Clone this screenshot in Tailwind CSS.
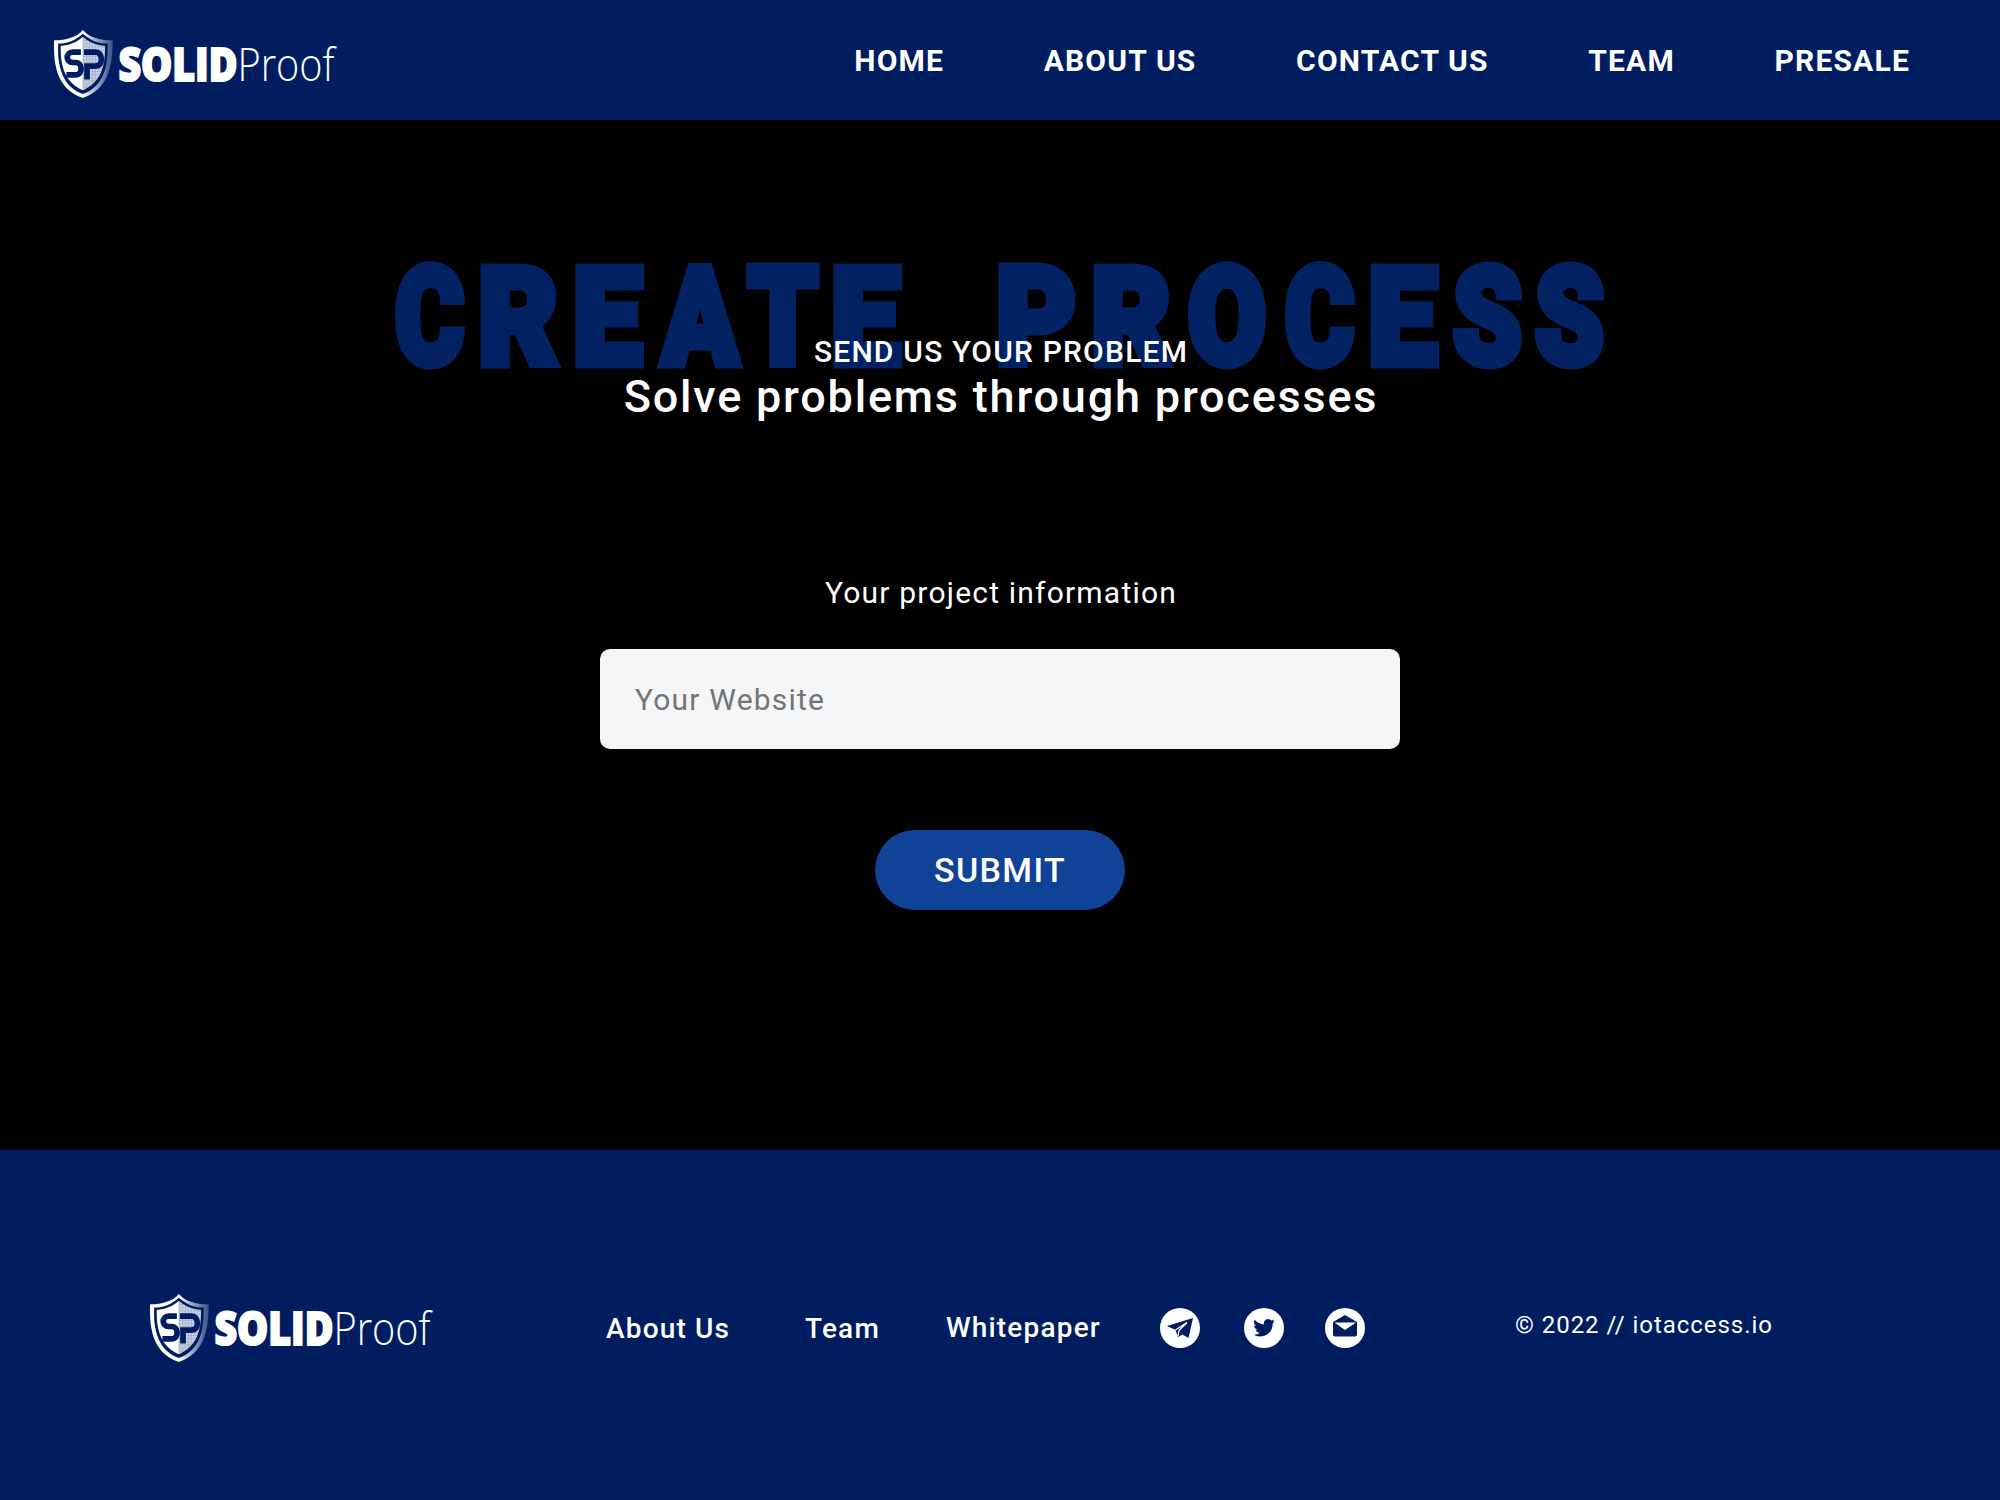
<!DOCTYPE html>
<html lang="en">
<head>
<meta charset="utf-8">
<title>Create Process</title>
<script src="https://cdn.jsdelivr.net/npm/@tailwindcss/browser@4"></script>
</head>
<body class="flex h-[1500px] w-[2000px] flex-col overflow-hidden bg-black font-['Roboto',sans-serif] text-white">
<svg class="absolute h-0 w-0">
  <defs>
    <linearGradient id="rim" x1="0" x2="1" y1="0" y2="0">
      <stop offset="0.5" stop-color="#fff"/><stop offset="0.65" stop-color="#b4bdd6"/><stop offset="1" stop-color="#3a5088"/>
    </linearGradient>
    <pattern id="mesh" width="3" height="3" patternUnits="userSpaceOnUse">
      <rect width="3" height="3" fill="#c9d0e2"/><path d="M0 0H3M0 0V3" stroke="#98a5c6" stroke-width="1"/>
    </pattern>
    <symbol id="logo" viewBox="0 0 290 76">
      <g transform="scale(1.03)">
      <path d="M30 2C24 9 14 12 2 12C1 38 6 60 30 68C54 60 59 38 59 12C46 12 36 9 30 2Z" fill="url(#rim)"/>
      <path d="M30 5.500C23 12 15 15 6 15C5 37 10 57 30 64C50 57 55 37 54 15C45 15 37 12 30 5.500Z" fill="#001d60"/>
      <path d="M30 8.500C24 14 17 16.500 8.500 17.500C8 38 13 53 30 60.500Z" fill="#fff"/>
      <path d="M30 8.500C36 14 43 16.500 51.500 17.500C52 38 47 53 30 60.500Z" fill="url(#mesh)"/>
      <path d="M28 23.500H20C13 23.500 13 33.500 20 33.500H23C30 33.500 30 45.500 23 45.500H14" fill="none" stroke="#001d60" stroke-width="5.500"/>
      <path d="M34 50V37H42C50 37 50 23.500 42 23.500H31" fill="none" stroke="#001d60" stroke-width="5.500"/>
      </g>
      <text y="53" fill="#fff" font-family="Open Sans, sans-serif" font-size="46.500"><tspan x="66.500" font-weight="800" stroke="#fff" stroke-width="2" textLength="119" lengthAdjust="spacingAndGlyphs">SOLID</tspan><tspan x="185.500" font-weight="300" textLength="97" lengthAdjust="spacingAndGlyphs">Proof</tspan></text>
    </symbol>
  </defs>
</svg>

<header class="flex h-[120px] shrink-0 items-start justify-between bg-[#001d60] pr-[90px] pl-[52px]">
  <svg class="mt-[28px] h-[76px] w-[290px]"><use href="#logo"/></svg>
  <nav class="flex gap-[99.5px] text-[30px] leading-[121px] font-bold tracking-[0.04em]">
    <a>HOME</a><a>ABOUT US</a><a>CONTACT US</a><a>TEAM</a><a>PRESALE</a>
  </nav>
</header>

<main class="flex h-[1030px] shrink-0 flex-col items-center">
  <div class="relative mt-[133px] h-[179px] w-full text-center">
    <svg class="absolute top-0 left-0 h-[130px] w-[2000px] overflow-visible" viewBox="0 0 2000 130">
      <text y="110.500" font-family="Roboto, sans-serif" font-weight="900" font-size="135" fill="#022263" stroke="#022263" stroke-width="9"><tspan x="395" textLength="69" lengthAdjust="spacingAndGlyphs">C</tspan><tspan x="478" textLength="80" lengthAdjust="spacingAndGlyphs">R</tspan><tspan x="573" textLength="69" lengthAdjust="spacingAndGlyphs">E</tspan><tspan x="662" textLength="76" lengthAdjust="spacingAndGlyphs">A</tspan><tspan x="748" textLength="70" lengthAdjust="spacingAndGlyphs">T</tspan><tspan x="831" textLength="69" lengthAdjust="spacingAndGlyphs">E</tspan> <tspan x="996" textLength="80" lengthAdjust="spacingAndGlyphs">P</tspan><tspan x="1091" textLength="80" lengthAdjust="spacingAndGlyphs">R</tspan><tspan x="1188" textLength="78" lengthAdjust="spacingAndGlyphs">O</tspan><tspan x="1285" textLength="69" lengthAdjust="spacingAndGlyphs">C</tspan><tspan x="1368" textLength="69" lengthAdjust="spacingAndGlyphs">E</tspan><tspan x="1453" textLength="69" lengthAdjust="spacingAndGlyphs">S</tspan><tspan x="1535" textLength="69" lengthAdjust="spacingAndGlyphs">S</tspan></text>
    </svg>
    <h2 class="relative mt-[81px] pl-[2px] text-[30px] leading-[36px] font-medium tracking-[0.04em]">SEND US YOUR PROBLEM</h2>
    <h1 class="relative pl-[2px] text-[45px] leading-[54px] font-medium tracking-[0.04em]">Solve problems through processes</h1>
  </div>
  <label class="mt-[143px] pl-[2px] text-[30px] leading-[36px] tracking-[0.04em]">Your project information</label>
  <input class="mt-[38px] h-[100px] w-[800px] rounded-[10px] bg-[#f5f6f8] px-[35px] text-[30px] tracking-[0.04em] placeholder:text-[#757575]" placeholder="Your Website">
  <button class="mt-[81px] h-[80px] w-[250px] rounded-full bg-[#104298] text-[34px] font-medium tracking-[0.04em]">SUBMIT</button>
</main>

<footer class="flex h-[350px] shrink-0 items-start bg-[#001d60]">
  <svg class="mt-[142px] ml-[148px] h-[76px] w-[290px]"><use href="#logo"/></svg>
  <nav class="mt-[162px] ml-[168px] flex text-[28px] leading-[34px] font-medium tracking-[0.042em]">
    <a class="w-[199px]">About Us</a><a class="w-[141px]">Team</a><a class="-mt-px w-[214px]">Whitepaper</a>
  </nav>
  <div class="mt-[158px] flex">
    <svg class="h-10 w-10" viewBox="0 0 40 40"><circle cx="20" cy="20" r="20" fill="#fff"/><path d="M7 18L33 10L28.500 30L22.500 26.500L18 29L15.500 22Z" fill="#001d60"/><path d="M15.500 22L27 14.500L19 22.500L18 28" fill="none" stroke="#fff" stroke-width="1.300"/></svg>
    <svg class="ml-11 h-10 w-10" viewBox="0 0 40 40"><circle cx="20" cy="20" r="20" fill="#fff"/><path transform="translate(9.300 9) scale(.9)" d="M23.950 4.570a10 10 0 0 1-2.820.77 4.960 4.960 0 0 0 2.160-2.720 9.900 9.900 0 0 1-3.120 1.190 4.920 4.920 0 0 0-8.380 4.480A13.930 13.930 0 0 1 1.640 3.160a4.920 4.920 0 0 0 1.520 6.570 4.900 4.900 0 0 1-2.230-.61v.06a4.920 4.920 0 0 0 3.950 4.830 5 5 0 0 1-2.210.08 4.940 4.940 0 0 0 4.600 3.420A9.870 9.870 0 0 1 0 19.540a13.990 13.990 0 0 0 7.550 2.210c9.050 0 14-7.500 14-13.980v-.63a9.900 9.900 0 0 0 2.400-2.570Z" fill="#001d60"/></svg>
    <svg class="ml-[41px] h-10 w-10" viewBox="0 0 40 40"><circle cx="20" cy="20" r="20" fill="#fff"/><path d="M8 14L20 7L32 14V26.500Q32 28.500 30 28.500H10Q8 28.500 8 26.500Z" fill="#001d60"/><path d="M9.500 14.500H31L20 22Z" fill="#fff"/></svg>
  </div>
  <p class="mt-[161px] ml-[150px] text-[24px] leading-[29px] tracking-[0.04em]">© 2022 // iotaccess.io</p>
</footer>
</body>
</html>
